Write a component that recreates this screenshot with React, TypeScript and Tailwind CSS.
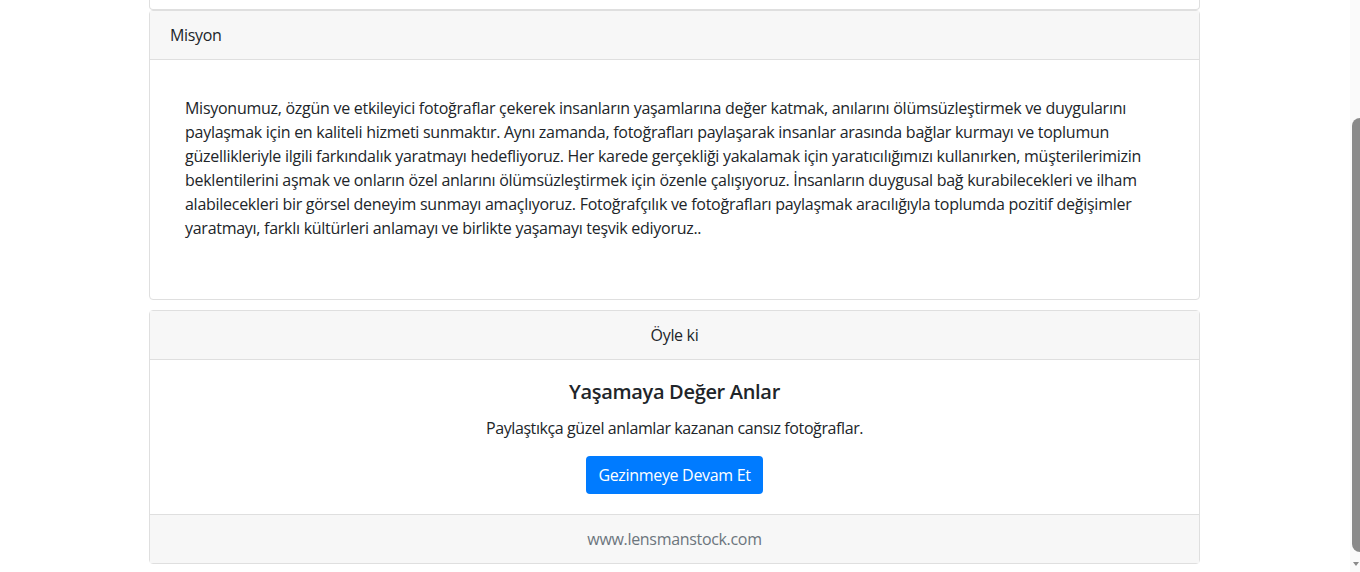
const lines = [
  'Misyonumuz, özgün ve etkileyici fotoğraflar çekerek insanların yaşamlarına değer katmak, anılarını ölümsüzleştirmek ve duygularını',
  'paylaşmak için en kaliteli hizmeti sunmaktır. Aynı zamanda, fotoğrafları paylaşarak insanlar arasında bağlar kurmayı ve toplumun',
  'güzellikleriyle ilgili farkındalık yaratmayı hedefliyoruz. Her karede gerçekliği yakalamak için yaratıcılığımızı kullanırken, müşterilerimizin',
  'beklentilerini aşmak ve onların özel anlarını ölümsüzleştirmek için özenle çalışıyoruz. İnsanların duygusal bağ kurabilecekleri ve ilham',
  'alabilecekleri bir görsel deneyim sunmayı amaçlıyoruz. Fotoğrafçılık ve fotoğrafları paylaşmak aracılığıyla toplumda pozitif değişimler',
  'yaratmayı, farklı kültürleri anlamayı ve birlikte yaşamayı teşvik ediyoruz..',
];

export default function App() {
  return (
    <div
      className="flex h-[572px] w-[1360px] overflow-hidden bg-white text-[16px] leading-6 tracking-[-0.02em] text-[#212529]"
      style={{ fontFamily: '"Open Sans", "Noto Sans", sans-serif' }}
    >
      <main className="flex-1">
        {/* previous card, scrolled mostly out of view */}
        <div className="ml-[149px] h-[10px] w-[1051px] rounded-b border-x border-b border-[#dfdfdf]" />

        <section className="ml-[149px] w-[1051px] rounded border border-[#dfdfdf]">
          <div className="border-b border-[#dfdfdf] bg-[#f7f7f7] px-5 py-3">Misyon</div>
          <div className="px-5 py-5">
            <p className="px-[15px] pt-4 pb-[39px] tracking-[-0.017em]">
              {lines.map((l, i) => (
                <span key={i} className="block whitespace-nowrap">
                  {l}
                </span>
              ))}
            </p>
          </div>
        </section>

        <section className="mt-[10px] ml-[149px] w-[1051px] rounded border border-[#dfdfdf] text-center">
          <div className="border-b border-[#dfdfdf] bg-[#f7f7f7] px-5 py-3">Öyle ki</div>
          <div className="p-5">
            <h5 className="mb-3 text-[20px] leading-6 font-semibold">Yaşamaya Değer Anlar</h5>
            <p className="mb-4 tracking-[-0.025em]">Paylaştıkça güzel anlamlar kazanan cansız fotoğraflar.</p>
            <button className="h-[38px] rounded bg-[#007bff] px-3 text-white">Gezinmeye Devam Et</button>
          </div>
          <div className="border-t border-[#dfdfdf] bg-[#f7f7f7] px-5 py-3 text-[#6c757d]">www.lensmanstock.com</div>
        </section>
      </main>

      {/* scrollbar */}
      <aside className="flex w-[10px] flex-col items-end bg-[#fafafa] pt-[118px]">
        <div className="h-[434px] w-[8px] rounded-l-full rounded-r-sm bg-[#8a8a8a]" />
        <div className="mt-[10px] mr-[1px] h-0 w-0 border-x-[3px] border-t-[4px] border-x-transparent border-t-[#8a8a8a]" />
      </aside>
    </div>
  );
}
